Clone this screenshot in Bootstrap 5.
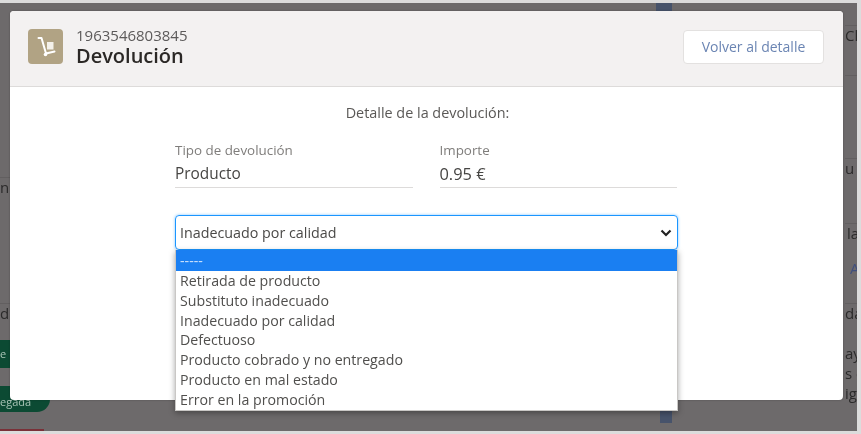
<!doctype html>
<html lang="es">
<head>
<meta charset="utf-8">
<title>Devolución</title>
<link rel="stylesheet" href="https://cdn.jsdelivr.net/npm/bootstrap@5.3.0/dist/css/bootstrap.min.css">
<style>
html,body{height:434px;overflow:hidden;background:#dcdcdc}
body{font-family:"Open Sans","Liberation Sans",sans-serif;color:#3e3e3c}
.frame{position:relative;width:857px;height:428px;margin-top:3px;background-color:#6d6a6b;overflow:hidden;filter:blur(.55px)}
.under{height:100%;background-color:#6d6a6b;color:#2b2a2a;font-size:15px;line-height:18px}
.left-strip{width:60px;display:grid;grid-template-rows:175px 18px 108px 18px 18px 28px 18px 26px 1fr 2px}
.mid-strip{position:relative}
.navy-top{width:16px;height:8px;background:#47536b;margin-left:596px}
.navy-bottom{width:12px;height:31px;background:#47536b;margin-left:600px;margin-top:381px}
.right-strip{width:12px;display:grid;grid-template-rows:23px 18px 32px 83px 18px 47px 18px 17px 18px 27px 18px 22px 18px 2px 18px 2px 18px 1fr;white-space:nowrap}
.hair{border-bottom:1px solid #625f60}
.blue-bit{color:#3f4f7d;padding-left:5px}
.pad-bit{padding-left:2px}
.green-short{background:#0c4a33;width:24px;border-radius:0 12px 12px 0;color:#a9c4b6;font-size:11px;line-height:28px}
.green-pill{background:#0c4a33;width:50px;border-radius:0 13px 13px 0;color:#a9c4b6;font-size:11px;line-height:32px;white-space:nowrap;overflow:hidden}
.red-bit{background:#7a3038;width:44px}
.dlg{position:absolute;left:10px;top:8px;width:833px;height:389px;background:#fff;border-radius:4px;box-shadow:0 0 2px rgba(0,0,0,.3)}
.dlg-head{height:76px;background:#f3f1f1;border-bottom:1px solid #dddbda;border-radius:4px 4px 0 0;padding:18px 19px 0 18px}
.case-icon{width:35px;height:35px;background:#b1a384;border-radius:4px;margin-right:13px}
.case-id{font-size:15px;line-height:17px;color:#5c5a5a;margin-top:-2px}
.case-title{font-size:20px;line-height:23px;font-weight:600;color:#2b2826}
.back-btn{width:141px;height:34px;margin-top:1px;padding:0;background:#fff;border:1px solid #e3e1e0;border-radius:4px;color:#6b85b3;font-size:14px;line-height:30px}
.back-btn:hover{background:#fff;color:#6b85b3}
.detail-title{font-size:14.4px;line-height:18px;color:#5a5856;text-align:center;margin-top:17px;margin-left:2px;margin-bottom:20px}
.fields{margin-left:165px;width:502px;gap:27px}
.fld{flex:1 1 0;height:46px;border-bottom:1px solid #dddbda}
.fld-label{font-size:13.4px;line-height:17px;color:#7f7d7b;margin-bottom:5px}
.fld-value{font-size:15.4px;line-height:20px;color:#464543}
.val-money{font-size:16.4px}
.pick-wrap{position:relative;margin:27px 0 0 165px;width:503px}
.pick-box{height:35px;border:1px solid #1b96ff;border-radius:4px;box-shadow:0 0 3px #7fc4ff;padding:0 5px 0 4px;font-size:14.3px;line-height:34px;color:#4a4947}
.pick-menu{position:absolute;left:0;right:0;top:35px;height:161px;background:#fff;border:1px solid #c9c7c5;border-top:0;box-shadow:0 2px 6px rgba(0,0,0,.35);font-size:14.2px;line-height:19.75px;color:#504f4d;list-style:none;margin:0;padding:0}
.pick-menu li{padding-left:4px;height:19.75px}
.pick-menu li.on{background:#1a7ff2;color:#cfe3fb;height:21px;line-height:21px}
</style>
</head>
<body>
<div class="frame">
  <div class="under d-flex">
    <div class="left-strip">
      <div class="hair"></div><div>n</div><div class="hair"></div><div>d</div><div></div>
      <div class="green-short">e</div><div></div>
      <div class="green-pill">egada</div><div></div><div class="red-bit"></div>
    </div>
    <div class="mid-strip flex-grow-1">
      <div class="navy-top"></div>
      <div class="navy-bottom"></div>
    </div>
    <div class="right-strip">
      <div class="hair"></div><div>Ch</div><div class="hair"></div><div class="hair"></div><div>u l</div><div class="hair"></div>
      <div class="pad-bit">la</div><div></div><div class="blue-bit">A</div><div class="hair"></div>
      <div>da</div><div></div>
      <div>ay</div><div></div>
      <div>s e</div><div></div><div>ig</div>
    </div>
  </div>

  <div class="dlg">
    <div class="dlg-head d-flex align-items-start">
      <div class="case-icon d-flex align-items-center justify-content-center flex-shrink-0">
        <svg width="22" height="22" viewBox="0 0 22 22" fill="none">
          <path d="M3.5 2 L6.5 2 L11 17.5 L19.5 15.5" stroke="#fff" stroke-width="2" stroke-linecap="round" stroke-linejoin="round"/>
          <rect x="12" y="6" width="6.5" height="7.5" fill="#f4f1ea"/>
          <circle cx="10.5" cy="18.5" r="1.8" fill="#fff"/>
        </svg>
      </div>
      <div class="flex-grow-1">
        <div class="case-id">1963546803845</div>
        <div class="case-title">Devolución</div>
      </div>
      <button type="button" class="btn back-btn flex-shrink-0">Volver al detalle</button>
    </div>
    <div class="detail-title">Detalle de la devolución:</div>
    <div class="fields d-flex">
      <div class="fld">
        <div class="fld-label">Tipo de devolución</div>
        <div class="fld-value">Producto</div>
      </div>
      <div class="fld">
        <div class="fld-label">Importe</div>
        <div class="fld-value val-money">0.95 €</div>
      </div>
    </div>
    <div class="pick-wrap">
      <div class="pick-box d-flex justify-content-between align-items-center">
        <span>Inadecuado por calidad</span>
        <svg width="12" height="8" viewBox="0 0 12 8" fill="none"><path d="M1.5 1.5 L6 6 L10.5 1.5" stroke="#222" stroke-width="2.2"/></svg>
      </div>
      <ul class="pick-menu">
        <li class="on">-----</li>
        <li>Retirada de producto</li>
        <li>Substituto inadecuado</li>
        <li>Inadecuado por calidad</li>
        <li>Defectuoso</li>
        <li>Producto cobrado y no entregado</li>
        <li>Producto en mal estado</li>
        <li>Error en la promoción</li>
      </ul>
    </div>
  </div>
</div>
<script src="https://cdn.jsdelivr.net/npm/bootstrap@5.3.0/dist/js/bootstrap.bundle.min.js"></script>
</body>
</html>
